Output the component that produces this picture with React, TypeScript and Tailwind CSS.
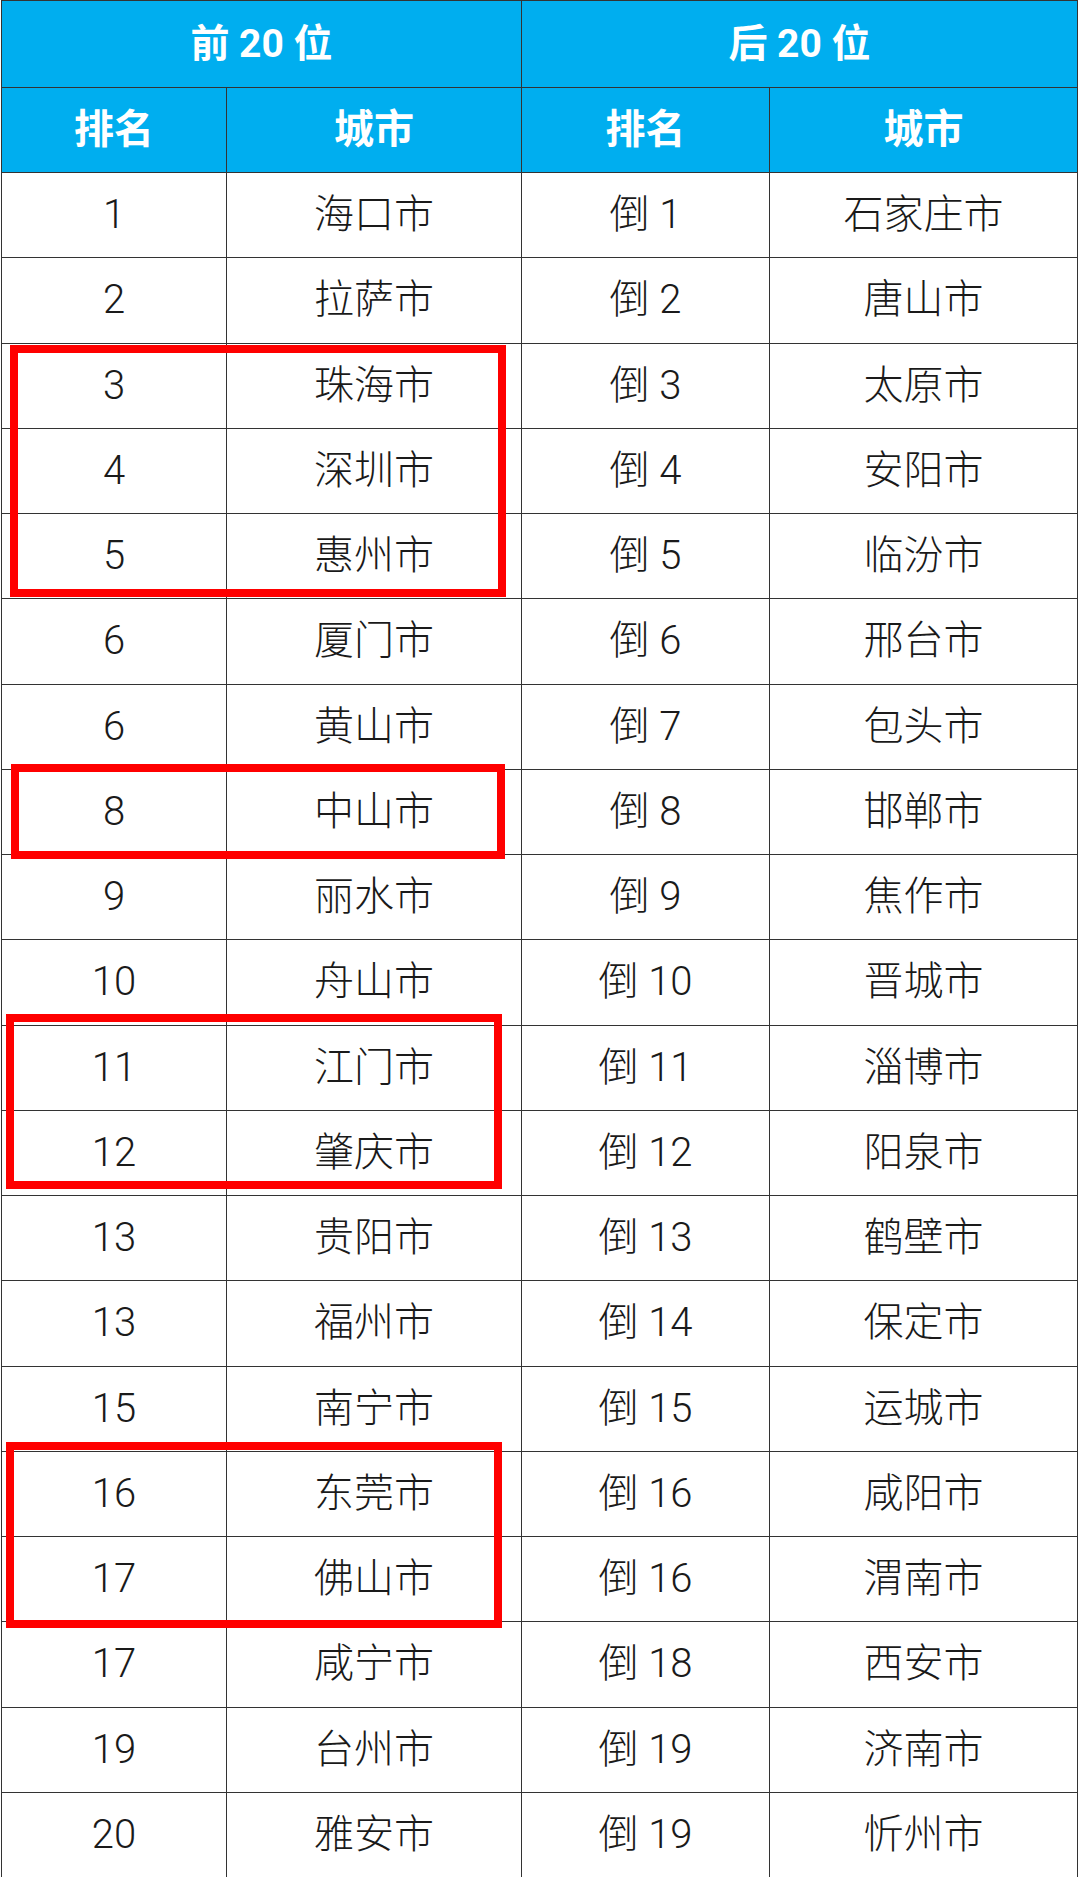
import React from "react";

const left: [string, string][] = [
  ["1", "海口市"],
  ["2", "拉萨市"],
  ["3", "珠海市"],
  ["4", "深圳市"],
  ["5", "惠州市"],
  ["6", "厦门市"],
  ["6", "黄山市"],
  ["8", "中山市"],
  ["9", "丽水市"],
  ["10", "舟山市"],
  ["11", "江门市"],
  ["12", "肇庆市"],
  ["13", "贵阳市"],
  ["13", "福州市"],
  ["15", "南宁市"],
  ["16", "东莞市"],
  ["17", "佛山市"],
  ["17", "咸宁市"],
  ["19", "台州市"],
  ["20", "雅安市"],
];

const right: [string, string][] = [
  ["倒 1", "石家庄市"],
  ["倒 2", "唐山市"],
  ["倒 3", "太原市"],
  ["倒 4", "安阳市"],
  ["倒 5", "临汾市"],
  ["倒 6", "邢台市"],
  ["倒 7", "包头市"],
  ["倒 8", "邯郸市"],
  ["倒 9", "焦作市"],
  ["倒 10", "晋城市"],
  ["倒 11", "淄博市"],
  ["倒 12", "阳泉市"],
  ["倒 13", "鹤壁市"],
  ["倒 14", "保定市"],
  ["倒 15", "运城市"],
  ["倒 16", "咸阳市"],
  ["倒 16", "渭南市"],
  ["倒 18", "西安市"],
  ["倒 19", "济南市"],
  ["倒 19", "忻州市"],
];

const font = {
  fontFamily: 'Roboto, "Noto Sans CJK SC", sans-serif',
};

export default function App() {
  return (
    <div className="relative w-[1080px] h-[1877px] bg-white" style={font}>
      <div className="ml-[1px] w-[1077px] border-l border-t border-[#333]">
        <div className="flex h-[87px] bg-[#00AEEF] text-white font-bold text-[39px]">
          <div className="w-[520px] flex items-center justify-center border-r border-b border-[#333]">
            前 20 位
          </div>
          <div className="flex-1 flex items-center justify-center border-r border-b border-[#333]">
            后 20 位
          </div>
        </div>
        <div className="flex h-[85px] bg-[#00AEEF] text-white font-bold text-[40px]">
          <div className="w-[225px] flex items-center justify-center border-r border-b border-[#333]">排名</div>
          <div className="w-[295px] flex items-center justify-center border-r border-b border-[#333]">城市</div>
          <div className="w-[248px] flex items-center justify-center border-r border-b border-[#333]">排名</div>
          <div className="flex-1 flex items-center justify-center border-r border-b border-[#333]">城市</div>
        </div>
        {left.map((l, i) => (
          <div key={i} className="flex h-[85.25px] text-[40px] font-light text-[#1a1a1a]">
            <div className="w-[225px] flex items-center justify-center border-r border-b border-[#333]">{l[0]}</div>
            <div className="w-[295px] flex items-center justify-center border-r border-b border-[#333]">{l[1]}</div>
            <div className="w-[248px] flex items-center justify-center border-r border-b border-[#333]">{right[i][0]}</div>
            <div className="flex-1 flex items-center justify-center border-r border-b border-[#333]">{right[i][1]}</div>
          </div>
        ))}
      </div>
      <div className="absolute left-[10px] top-[345px] w-[496px] h-[252px] border-[8px] border-[#FF0000]" />
      <div className="absolute left-[11px] top-[764px] w-[494px] h-[95px] border-[8px] border-[#FF0000]" />
      <div className="absolute left-[6px] top-[1014px] w-[496px] h-[175px] border-[8px] border-[#FF0000]" />
      <div className="absolute left-[6px] top-[1442px] w-[496px] h-[186px] border-[8px] border-[#FF0000]" />
    </div>
  );
}
